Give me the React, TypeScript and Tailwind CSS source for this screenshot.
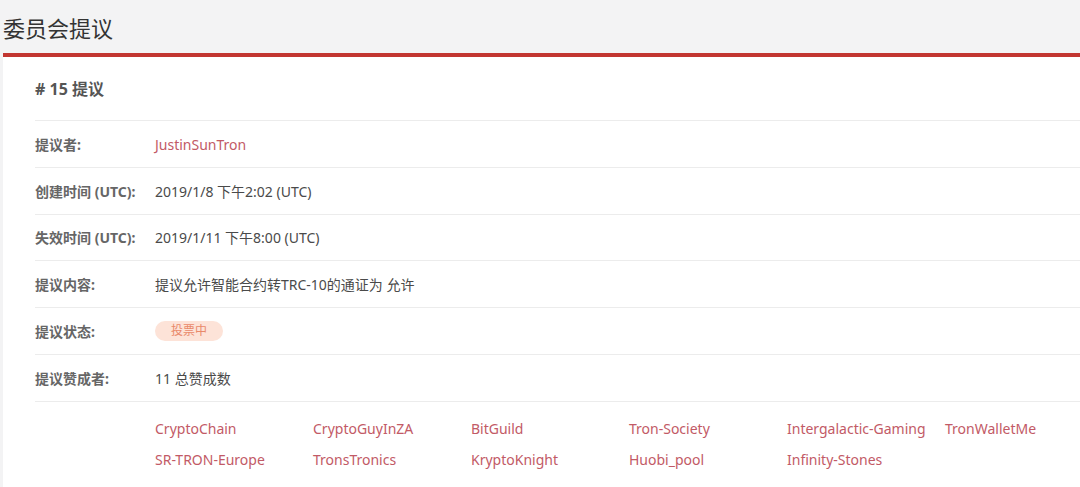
const font = {
  fontFamily: '"Noto Sans", "Noto Sans CJK SC", sans-serif',
};

const rows = [
  { label: "提议者:", value: "JustinSunTron", link: true },
  { label: "创建时间 (UTC):", value: "2019/1/8 下午2:02 (UTC)" },
  { label: "失效时间 (UTC):", value: "2019/1/11 下午8:00 (UTC)" },
  { label: "提议内容:", value: "提议允许智能合约转TRC-10的通证为 允许" },
  { label: "提议状态:", badge: "投票中" },
  { label: "提议赞成者:", value: "11 总赞成数" },
];

const voters = [
  "CryptoChain",
  "CryptoGuyInZA",
  "BitGuild",
  "Tron-Society",
  "Intergalactic-Gaming",
  "TronWalletMe",
  "SR-TRON-Europe",
  "TronsTronics",
  "KryptoKnight",
  "Huobi_pool",
  "Infinity-Stones",
];

export default function App() {
  return (
    <div
      className="w-[1080px] h-[487px] overflow-hidden bg-[#f3f3f4] text-[#444]"
      style={font}
    >
      <div className="h-[53px] flex items-center pl-[3px] pt-[2px]">
        <h1 className="text-[22px] text-[#333] leading-none">委员会提议</h1>
      </div>
      <div className="ml-[3px] h-[4px] bg-[#c23631]" />
      <div className="ml-[3px] bg-white pl-[32px] h-full">
        <div className="h-[63px] flex items-center">
          <h2 className="text-[16px] font-bold text-[#555] pt-[1px]">
            # 15 提议
          </h2>
        </div>
        {rows.map((r, i) => (
          <div
            key={r.label}
            className={`flex items-center border-t border-[#ececec] text-[14px] ${
              i === 2 ? "h-[46px]" : "h-[47px]"
            }`}
          >
            <div className="w-[120px] font-bold text-[#666]">{r.label}</div>
            {r.badge ? (
              <span className="rounded-full bg-[#fde3d8] text-[#e9896a] text-[12px] px-[16px] py-[1px]">
                {r.badge}
              </span>
            ) : (
              <div className={r.link ? "text-[#c25a66]" : "text-[#4a4a4a]"}>
                {r.value}
              </div>
            )}
          </div>
        ))}
        <div className="border-t border-[#ececec] pl-[120px] pt-[16px] grid grid-cols-[repeat(6,158px)] gap-y-[10px] text-[14px] text-[#c25a66]">
          {voters.map((v) => (
            <div key={v} className="leading-[21px]">
              {v}
            </div>
          ))}
        </div>
      </div>
    </div>
  );
}
